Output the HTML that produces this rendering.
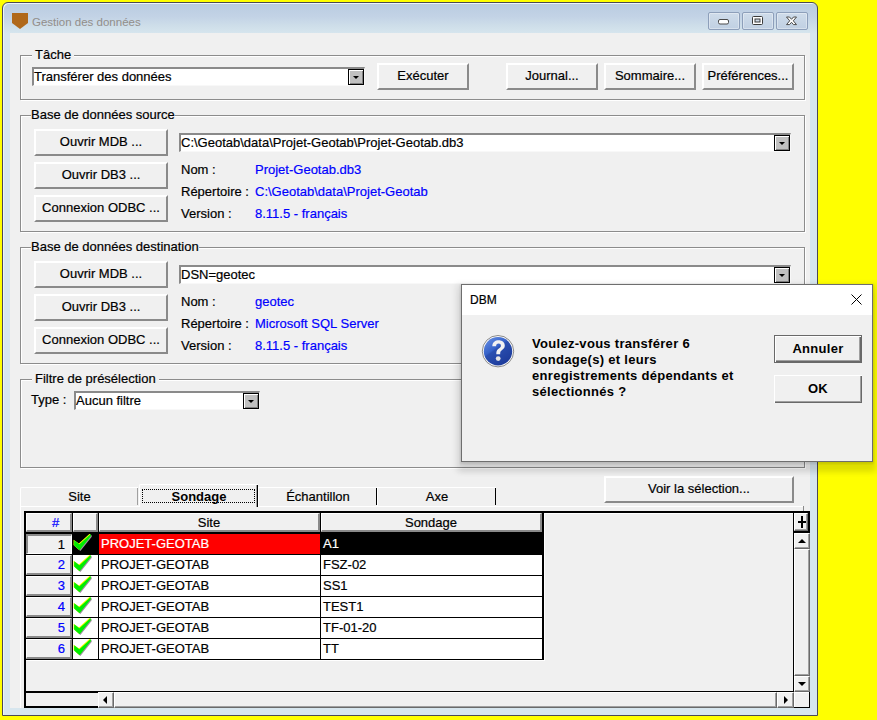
<!DOCTYPE html>
<html><head><meta charset="utf-8">
<style>
*{margin:0;padding:0;box-sizing:border-box}
html,body{width:877px;height:720px;overflow:hidden;background:#ffff00;font-family:"Liberation Sans",sans-serif;font-size:13px;color:#000;-webkit-text-stroke:0.2px}
.a{position:absolute}
#win{position:absolute;left:2px;top:2px;width:816px;height:714px;border:1px solid #4a4a55;border-radius:6px 6px 0 0;background:linear-gradient(#b9cce0 0px,#c3d3e6 14px,#cddde9 22px,#d7e6ee 31px,#d7e6ee 100%);box-shadow:inset 1px 1px 0 #eef4f9}
#client{position:absolute;left:10px;top:33px;width:800px;height:675px;background:#f0f0f0}
.grp{position:absolute;border:1px solid #8c8c8c;box-shadow:1px 1px 0 #fff, inset 1px 1px 0 #fff}
.gl{position:absolute;background:#f0f0f0;padding:0 3px;line-height:15px;white-space:nowrap}
.btn{position:absolute;background:#f0f0f0;border-top:2px solid #fff;border-left:2px solid #fff;border-bottom:2px solid #8a8a8a;border-right:2px solid #8a8a8a;text-align:center;white-space:nowrap;line-height:21px}
.combo{position:absolute;background:#fff;border-top:2px solid #8a8a8a;border-left:2px solid #8a8a8a;border-bottom:1px solid #f8f8f8;border-right:1px solid #f8f8f8;white-space:nowrap;line-height:16px;padding-left:0}
.dd{position:absolute;top:0;right:0;width:16px;height:16px;border:1px solid #000;background:#c0c0c0;box-shadow:inset 1px 1px 0 #fff,inset -1px -1px 0 #808080}
.dd:after{content:"";position:absolute;left:4px;top:6px;border-left:3px solid transparent;border-right:3px solid transparent;border-top:3px solid #000}
.lbl{position:absolute;white-space:nowrap;line-height:15px}
.blue{color:#0000ff}
.tbtn{position:absolute;top:12px;width:32px;height:18px;border:1px solid #8d9fba;border-radius:2px;background:linear-gradient(#cfdcea,#c0d0e2);box-shadow:inset 0 0 0 1px rgba(255,255,255,.35)}

.tab{position:absolute;background:#f0f0f0;border-top:1px solid #fff;border-left:1px solid #fff;text-align:center;line-height:18px;white-space:nowrap}
.tab .tr{position:absolute;right:0;top:0;bottom:0;width:2px}
.tab .g{border-right:1px solid #a0a0a0;width:1px;bottom:1px}
.tab .k{border-left:0;background:#000;width:1px;right:0;bottom:1px}
.tab .k2{background:linear-gradient(90deg,#a0a0a0 50%,#000 50%);width:2px;right:0}
.tab.sel{line-height:23px;z-index:2}
.tab b{-webkit-text-stroke:0}
.focus{position:absolute;left:2px;top:4px;width:113px;height:14px;border:1px dotted #000}
.hc{position:absolute;height:19px;background:#f0f0f0;border-top:1px solid #fff;border-left:1px solid #fff;border-right:2px solid #8a8a8a;border-bottom:2px solid #8a8a8a;text-align:center;line-height:18px;white-space:nowrap}
.rh{position:absolute;left:26px;width:46px;height:20px;background:#f0f0f0;border-top:1px solid #fff;border-left:1px solid #fff;border-right:2px solid #8a8a8a;border-bottom:2px solid #8a8a8a;color:#0000ff;text-align:right;padding-right:5px;line-height:18px}
.rh.sunk{border-top:2px solid #8a8a8a;border-left:2px solid #8a8a8a;border-right:1px solid #fff;border-bottom:1px solid #fff;color:#000;line-height:18px;padding-right:6px}
.cell{position:absolute;height:20px;line-height:20px;padding-left:2px;white-space:nowrap;overflow:hidden}
.chk{position:absolute;left:0;top:0}
.sb{position:absolute;background:#f0f0f0;border-top:1px solid #fff;border-left:1px solid #fff;border-right:1px solid #6a6a6a;border-bottom:1px solid #6a6a6a;box-shadow:inset -1px -1px 0 #a0a0a0}
.arl,.arr,.aru,.ard{position:absolute;width:0;height:0}
.arl{left:4px;top:3px;border-top:4px solid transparent;border-bottom:4px solid transparent;border-right:4px solid #000}
.arr{left:6px;top:3px;border-top:4px solid transparent;border-bottom:4px solid transparent;border-left:4px solid #000}
.aru{left:3px;top:5px;border-left:4px solid transparent;border-right:4px solid transparent;border-bottom:4px solid #000}
.ard{left:3px;top:5px;border-left:4px solid transparent;border-right:4px solid transparent;border-top:4px solid #000}
.plus1{position:absolute;left:3px;top:7px;width:8px;height:2px;background:#000}
.plus2{position:absolute;left:6px;top:2px;width:2px;height:12px;background:#000}
.dt{font-weight:bold;letter-spacing:.3px;line-height:16px;-webkit-text-stroke:0}
.dbtn{position:absolute;background:#f0f0f0;box-shadow:inset 1px 1px 0 #fff,inset -1px -1px 0 #696969,inset -2px -2px 0 #a0a0a0;text-align:center;font-weight:bold;line-height:27px;letter-spacing:.3px;-webkit-text-stroke:0}
.dbtn.def{border:1px solid #696969;line-height:25px}
</style></head><body>
<div id="win"></div>
<!-- title -->
<svg class="a" style="left:12px;top:13px" width="17" height="17" viewBox="0 0 17 17"><path d="M0 0H16V10L8 16L0 10Z" fill="#b0681a"/></svg>
<div class="lbl" style="left:32px;top:15px;color:#928e8a;font-size:11.5px;-webkit-text-stroke:0">Gestion des données</div>
<div class="tbtn" style="left:708px"></div>
<div class="tbtn" style="left:742px"></div>
<div class="tbtn" style="left:776px"></div>
<svg class="a" style="left:700px;top:10px" width="110" height="22" viewBox="0 0 110 22">
<rect x="18.5" y="9.5" width="10" height="4.5" rx="1.5" fill="#fff" stroke="#4a4a4a" stroke-width="1"/>
<rect x="52.5" y="6.5" width="10" height="8" rx="1" fill="#fff" stroke="#3a3a3a" stroke-width="1"/>
<rect x="55" y="9" width="5" height="3" fill="#cdd9e6" stroke="#3a3a3a" stroke-width="1"/>
<path d="M86.5 7 L89.5 7 L91.5 9.3 L93.5 7 L96.5 7 L93.3 10.8 L96.5 14.6 L93.5 14.6 L91.5 12.3 L89.5 14.6 L86.5 14.6 L89.7 10.8 Z" fill="#fff" stroke="#4a4a4a" stroke-width="1" stroke-linejoin="round"/>
</svg>

<div id="client"></div>

<!-- Tache group -->
<div class="grp" style="left:20px;top:55px;width:785px;height:45px"></div>
<div class="gl" style="left:32px;top:47px">Tâche</div>
<div class="combo" style="left:32px;top:67px;width:333px;height:19px">Transférer des données<div class="dd"></div></div>
<div class="btn" style="left:377px;top:63px;width:92px;height:27px">Exécuter</div>
<div class="btn" style="left:506px;top:63px;width:92px;height:27px">Journal...</div>
<div class="btn" style="left:604px;top:63px;width:92px;height:27px">Sommaire...</div>
<div class="btn" style="left:702px;top:63px;width:92px;height:27px">Préférences...</div>

<!-- Source group -->
<div class="grp" style="left:20px;top:115px;width:785px;height:117px"></div>
<div class="gl" style="left:31px;top:107px;padding:0">Base de données source</div>
<div class="btn" style="left:34px;top:129px;width:134px;height:27px">Ouvrir MDB ...</div>
<div class="btn" style="left:34px;top:162px;width:134px;height:27px">Ouvrir DB3 ...</div>
<div class="btn" style="left:34px;top:195px;width:134px;height:27px">Connexion ODBC ...</div>
<div class="combo" style="left:179px;top:133px;width:612px;height:19px">C:\Geotab\data\Projet-Geotab\Projet-Geotab.db3<div class="dd"></div></div>
<div class="lbl" style="left:181px;top:162px">Nom :</div>
<div class="lbl" style="left:181px;top:184px">Répertoire :</div>
<div class="lbl" style="left:181px;top:206px">Version :</div>
<div class="lbl blue" style="left:255px;top:162px">Projet-Geotab.db3</div>
<div class="lbl blue" style="left:255px;top:184px">C:\Geotab\data\Projet-Geotab</div>
<div class="lbl blue" style="left:255px;top:206px">8.11.5 - français</div>

<!-- Dest group -->
<div class="grp" style="left:20px;top:247px;width:785px;height:117px"></div>
<div class="gl" style="left:31px;top:239px;padding:0">Base de données destination</div>
<div class="btn" style="left:34px;top:261px;width:134px;height:27px">Ouvrir MDB ...</div>
<div class="btn" style="left:34px;top:294px;width:134px;height:27px">Ouvrir DB3 ...</div>
<div class="btn" style="left:34px;top:327px;width:134px;height:27px">Connexion ODBC ...</div>
<div class="combo" style="left:179px;top:265px;width:612px;height:19px">DSN=geotec<div class="dd"></div></div>
<div class="lbl" style="left:181px;top:294px">Nom :</div>
<div class="lbl" style="left:181px;top:316px">Répertoire :</div>
<div class="lbl" style="left:181px;top:338px">Version :</div>
<div class="lbl blue" style="left:255px;top:294px">geotec</div>
<div class="lbl blue" style="left:255px;top:316px">Microsoft SQL Server</div>
<div class="lbl blue" style="left:255px;top:338px">8.11.5 - français</div>

<!-- Filter group -->
<div class="grp" style="left:20px;top:379px;width:785px;height:89px"></div>
<div class="gl" style="left:32px;top:371px">Filtre de présélection</div>
<div class="lbl" style="left:31px;top:392px">Type :</div>
<div class="combo" style="left:74px;top:391px;width:186px;height:19px">Aucun filtre<div class="dd"></div></div>


<!-- Tab control -->
<div class="a" style="left:20px;top:506px;width:784px;height:1px;background:#fff"></div>
<div class="a" style="left:20px;top:506px;width:1px;height:202px;background:#fff"></div>
<div class="a" style="left:803px;top:506px;width:1px;height:5px;background:#8a8a8a"></div>
<div class="tab" style="left:20px;top:487px;width:118px;height:19px;border-radius:2px 0 0 0;line-height:17px"><div class="tr g"></div>Site</div>
<div class="tab" style="left:258px;top:487px;width:119px;height:19px"><div class="tr k"></div>Échantillon</div>
<div class="tab" style="left:377px;top:487px;width:119px;height:19px"><div class="tr k"></div>Axe</div>
<div class="tab sel" style="left:139px;top:484px;width:119px;height:23px;border-radius:2px 0 0 0"><div class="tr k2"></div><div class="focus"></div><b>Sondage</b></div>
<div class="btn" style="left:604px;top:476px;width:190px;height:27px">Voir la sélection...</div>

<!-- Grid -->
<div class="a" style="left:24px;top:511px;width:786px;height:197px;border:2px solid #000;background:#f0f0f0"></div>
<div class="a" style="left:26px;top:513px;width:767px;height:1px;background:#fff"></div>
<div class="a" style="left:72px;top:513px;width:1px;height:147px;background:#000"></div>
<div class="a" style="left:98px;top:513px;width:1px;height:147px;background:#000"></div>
<div class="a" style="left:320px;top:513px;width:1px;height:147px;background:#000"></div>
<div class="a" style="left:542px;top:513px;width:2px;height:147px;background:#000"></div>
<div class="a" style="left:544px;top:513px;width:1px;height:147px;background:#fff"></div>
<div class="a" style="left:26px;top:532px;width:518px;height:2px;background:#000"></div>
<div class="hc" style="left:26px;top:513px;width:46px;color:#0000ff;text-align:left;padding-left:25px">#</div>
<div class="hc" style="left:73px;top:513px;width:25px"></div>
<div class="hc" style="left:99px;top:513px;width:221px">Site</div>
<div class="hc" style="left:321px;top:513px;width:221px">Sondage</div>
<div class="rh sunk" style="top:534px">1</div><div class="cell" style="left:73px;top:534px;width:25px;background:#000"><svg class="chk" width="20" height="19" viewBox="0 0 20 19"><path d="M2 7.1 L7.2 11 L18.4 0.8 L18.8 2.8 L7.4 17.1 L1.9 12.3 Z" fill="#a090a0"/><path d="M0.6 5.7 L5.8 9.6 L17 -0.6 L17.4 1.4 L6 15.7 L0.5 10.9 Z" fill="#ffff00"/><path d="M1.2 6.3 L6.4 10.2 L17.6 0 L18 2 L6.6 16.3 L1.1 11.5 Z" fill="#00ee00"/></svg></div><div class="cell" style="left:99px;top:534px;width:221px;background:#ff0000;color:#fff">PROJET-GEOTAB</div><div class="cell" style="left:321px;top:534px;width:221px;background:#000;color:#fff">A1</div><div class="a" style="left:26px;top:554px;width:518px;height:1px;background:#000"></div>
<div class="rh" style="top:555px">2</div><div class="cell" style="left:73px;top:555px;width:25px;background:#fff"><svg class="chk" width="20" height="19" viewBox="0 0 20 19"><path d="M2 7.1 L7.2 11 L18.4 0.8 L18.8 2.8 L7.4 17.1 L1.9 12.3 Z" fill="#a090a0"/><path d="M0.6 5.7 L5.8 9.6 L17 -0.6 L17.4 1.4 L6 15.7 L0.5 10.9 Z" fill="#ffff00"/><path d="M1.2 6.3 L6.4 10.2 L17.6 0 L18 2 L6.6 16.3 L1.1 11.5 Z" fill="#00ee00"/></svg></div><div class="cell" style="left:99px;top:555px;width:221px;background:#fff">PROJET-GEOTAB</div><div class="cell" style="left:321px;top:555px;width:221px;background:#fff">FSZ-02</div><div class="a" style="left:26px;top:575px;width:518px;height:1px;background:#000"></div>
<div class="rh" style="top:576px">3</div><div class="cell" style="left:73px;top:576px;width:25px;background:#fff"><svg class="chk" width="20" height="19" viewBox="0 0 20 19"><path d="M2 7.1 L7.2 11 L18.4 0.8 L18.8 2.8 L7.4 17.1 L1.9 12.3 Z" fill="#a090a0"/><path d="M0.6 5.7 L5.8 9.6 L17 -0.6 L17.4 1.4 L6 15.7 L0.5 10.9 Z" fill="#ffff00"/><path d="M1.2 6.3 L6.4 10.2 L17.6 0 L18 2 L6.6 16.3 L1.1 11.5 Z" fill="#00ee00"/></svg></div><div class="cell" style="left:99px;top:576px;width:221px;background:#fff">PROJET-GEOTAB</div><div class="cell" style="left:321px;top:576px;width:221px;background:#fff">SS1</div><div class="a" style="left:26px;top:596px;width:518px;height:1px;background:#000"></div>
<div class="rh" style="top:597px">4</div><div class="cell" style="left:73px;top:597px;width:25px;background:#fff"><svg class="chk" width="20" height="19" viewBox="0 0 20 19"><path d="M2 7.1 L7.2 11 L18.4 0.8 L18.8 2.8 L7.4 17.1 L1.9 12.3 Z" fill="#a090a0"/><path d="M0.6 5.7 L5.8 9.6 L17 -0.6 L17.4 1.4 L6 15.7 L0.5 10.9 Z" fill="#ffff00"/><path d="M1.2 6.3 L6.4 10.2 L17.6 0 L18 2 L6.6 16.3 L1.1 11.5 Z" fill="#00ee00"/></svg></div><div class="cell" style="left:99px;top:597px;width:221px;background:#fff">PROJET-GEOTAB</div><div class="cell" style="left:321px;top:597px;width:221px;background:#fff">TEST1</div><div class="a" style="left:26px;top:617px;width:518px;height:1px;background:#000"></div>
<div class="rh" style="top:618px">5</div><div class="cell" style="left:73px;top:618px;width:25px;background:#fff"><svg class="chk" width="20" height="19" viewBox="0 0 20 19"><path d="M2 7.1 L7.2 11 L18.4 0.8 L18.8 2.8 L7.4 17.1 L1.9 12.3 Z" fill="#a090a0"/><path d="M0.6 5.7 L5.8 9.6 L17 -0.6 L17.4 1.4 L6 15.7 L0.5 10.9 Z" fill="#ffff00"/><path d="M1.2 6.3 L6.4 10.2 L17.6 0 L18 2 L6.6 16.3 L1.1 11.5 Z" fill="#00ee00"/></svg></div><div class="cell" style="left:99px;top:618px;width:221px;background:#fff">PROJET-GEOTAB</div><div class="cell" style="left:321px;top:618px;width:221px;background:#fff">TF-01-20</div><div class="a" style="left:26px;top:638px;width:518px;height:1px;background:#000"></div>
<div class="rh" style="top:639px">6</div><div class="cell" style="left:73px;top:639px;width:25px;background:#fff"><svg class="chk" width="20" height="19" viewBox="0 0 20 19"><path d="M2 7.1 L7.2 11 L18.4 0.8 L18.8 2.8 L7.4 17.1 L1.9 12.3 Z" fill="#a090a0"/><path d="M0.6 5.7 L5.8 9.6 L17 -0.6 L17.4 1.4 L6 15.7 L0.5 10.9 Z" fill="#ffff00"/><path d="M1.2 6.3 L6.4 10.2 L17.6 0 L18 2 L6.6 16.3 L1.1 11.5 Z" fill="#00ee00"/></svg></div><div class="cell" style="left:99px;top:639px;width:221px;background:#fff">PROJET-GEOTAB</div><div class="cell" style="left:321px;top:639px;width:221px;background:#fff">TT</div><div class="a" style="left:26px;top:659px;width:518px;height:1px;background:#000"></div>

<div class="a" style="left:26px;top:660px;width:519px;height:1px;background:#fff"></div>
<!-- h scroll -->
<div class="a" style="left:26px;top:691px;width:72px;height:2px;background:#000"></div>
<div class="a" style="left:98px;top:691px;width:696px;height:1px;background:#000"></div>
<div class="sb" style="left:98px;top:692px;width:16px;height:16px"><div class="arl"></div></div>
<div class="sb" style="left:114px;top:692px;width:663px;height:16px"></div>
<div class="sb" style="left:777px;top:692px;width:17px;height:16px"><div class="arr"></div></div>
<div class="a" style="left:794px;top:692px;width:16px;height:16px;background:#f0f0f0;border-right:1px solid #000;border-bottom:1px solid #000;box-shadow:inset 1px 1px 0 #fff"></div>
<!-- v scroll -->
<div class="a" style="left:793px;top:513px;width:1px;height:179px;background:#000"></div>
<div class="a" style="left:793px;top:511px;width:17px;height:22px;background:#000"></div>
<div class="sb" style="left:794px;top:513px;width:14px;height:18px"><div class="plus1"></div><div class="plus2"></div></div>
<div class="sb" style="left:794px;top:533px;width:16px;height:16px"><div class="aru"></div></div>
<div class="sb" style="left:794px;top:549px;width:16px;height:127px"></div>
<div class="sb" style="left:794px;top:676px;width:16px;height:16px"><div class="ard"></div></div>
<!-- Dialog -->
<div class="a" style="left:461px;top:284px;width:412px;height:178px;border:1px solid #6e6e6e;background:#f0f0f0;box-shadow:0 1px 2px 1px rgba(0,0,0,.10),0 5px 6px 5px rgba(0,0,0,.08),0 9px 6px 1px rgba(0,0,0,.06)"></div>
<div class="a" style="left:462px;top:285px;width:410px;height:30px;background:#fff"></div>
<div class="lbl" style="left:470px;top:293px;font-size:12px;color:#000">DBM</div>
<svg class="a" style="left:851px;top:294px" width="12" height="11" viewBox="0 0 12 11"><path d="M0.5 0.5L10.5 10.5M10.5 0.5L0.5 10.5" stroke="#000" stroke-width="1"/></svg>
<svg class="a" style="left:481px;top:334px" width="34" height="34" viewBox="0 0 34 34">
<defs><linearGradient id="qg" x1="0" y1="0" x2="0.7" y2="1"><stop offset="0" stop-color="#6d95e8"/><stop offset=".45" stop-color="#3561c8"/><stop offset=".5" stop-color="#2a4fb0"/><stop offset="1" stop-color="#1c3a9a"/></linearGradient></defs>
<circle cx="17" cy="17.2" r="15.7" fill="#fafafa" stroke="#8a8a8a" stroke-width="1"/>
<circle cx="17" cy="17.2" r="14.2" fill="url(#qg)"/>
<path d="M11.3 12.3 C11.3 8.2 14.5 6.3 17.5 6.3 C21.2 6.3 23.8 8.4 23.8 11.6 C23.8 14.6 21.5 15.6 20 17 C19.3 17.7 19.2 18.6 19.2 20.2 L15.3 20.2 C15.3 18 15.6 16.6 17.2 15.1 C18.7 13.7 19.9 13.1 19.9 11.7 C19.9 10.5 19 9.6 17.6 9.6 C16 9.6 15.1 10.6 15.1 12.3 Z" fill="#f2f2f2"/>
<circle cx="17.2" cy="24.6" r="2.4" fill="#e4e4e4"/>
</svg>
<div class="lbl dt" style="left:532px;top:336px">Voulez-vous transférer 6</div>
<div class="lbl dt" style="left:532px;top:352px">sondage(s) et leurs</div>
<div class="lbl dt" style="left:532px;top:368px">enregistrements dépendants et</div>
<div class="lbl dt" style="left:532px;top:384px">sélectionnés ?</div>
<div class="dbtn def" style="left:774px;top:335px;width:88px;height:28px">Annuler</div>
<div class="dbtn" style="left:774px;top:375px;width:88px;height:28px">OK</div>
</body></html>
